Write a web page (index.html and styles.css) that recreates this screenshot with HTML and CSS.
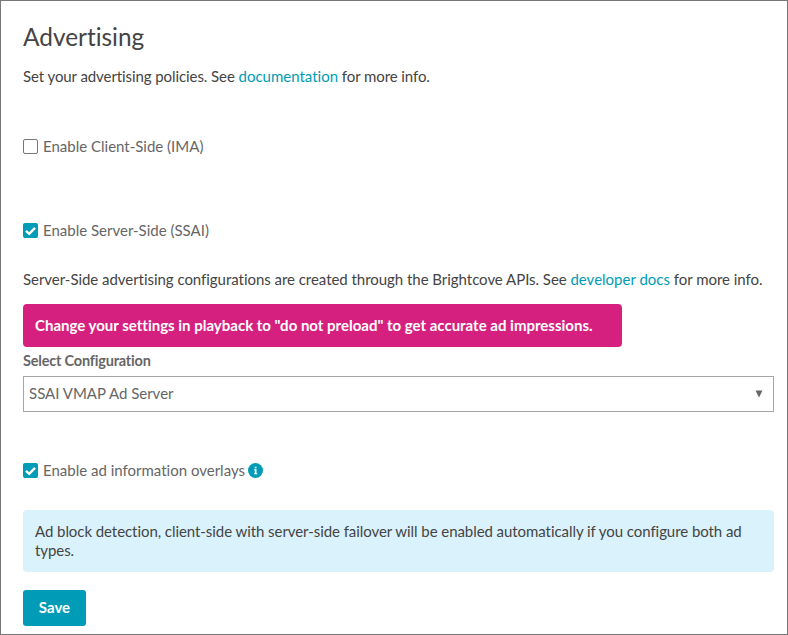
FILE: index.html
```html
<!DOCTYPE html>
<html lang="en">
<head>
<meta charset="utf-8">
<title>Advertising</title>
<link rel="stylesheet" href="styles.css">
</head>
<body>
<main class="panel">
  <h1 class="title">Advertising</h1>
  <p class="intro">Set your advertising policies. See <a href="#">documentation</a> for more info.</p>
  <label class="option client"><span class="box"></span>Enable Client-Side (IMA)</label>
  <label class="option server"><span class="box checked"><svg viewBox="0 0 15 15"><path d="M3 7.8 6.200 10.800 12 4.800"/></svg></span>Enable Server-Side (SSAI)</label>
  <p class="docs">Server-Side advertising configurations are created through the Brightcove APIs. See <a href="#">developer docs</a> for more info.</p>
  <div class="alert">Change your settings in playback to "do not preload" to get accurate ad impressions.</div>
  <div class="field-label">Select Configuration</div>
  <div class="select"><span>SSAI VMAP Ad Server</span><svg class="arrow" viewBox="0 0 8 8"><path d="M.5 .5h7L4 7.500z"/></svg></div>
  <label class="option overlays"><span class="box checked"><svg viewBox="0 0 15 15"><path d="M3 7.8 6.200 10.800 12 4.800"/></svg></span><span>Enable ad information overlays</span><svg class="info" viewBox="0 0 15 15"><circle cx="7.500" cy="7.500" r="7.500"/><path d="M6.700 3.700h1.800v1.500H6.700zM6 6.300h2.500v4h.8v1H6v-1h.8v-3H6z"/></svg></label>
  <div class="note">Ad block detection, client-side with server-side failover will be enabled automatically if you configure both ad types.</div>
  <button class="save">Save</button>
</main>
</body>
</html>
```
FILE: styles.css
```css
* { box-sizing: border-box; }
body { margin: 0; font: 15px/20px Lato, "Liberation Sans", sans-serif; font-variant-ligatures: none; color: #444; }
.panel { height: 635px; padding: 21px 13px 0 22px; border: 1px solid #777; background: #fff; display: flex; flex-direction: column; align-items: flex-start; }
h1, p { margin: 0; font-weight: 400; }
.title { font-size: 24.4px; line-height: 30px; }
.intro { margin-top: 14px; letter-spacing: -.083px; }
a { color: #009cb5; text-decoration: none; letter-spacing: 0; }
.option { display: flex; align-items: center; height: 20px; color: #666; }
.box { width: 15px; height: 15px; margin-right: 5px; border: 1px solid #777; border-radius: 2px; background: #fff; }
.checked { border: 0; background: #009cb7; }
.box svg { display: block; width: 15px; height: 15px; fill: none; stroke: #fff; stroke-width: 2.4; }
.client { margin-top: 50px; }
.server { margin-top: 64px; }
.docs { margin-top: 29px; white-space: nowrap; letter-spacing: -.038px; }
.alert { width: 599px; height: 43px; margin-top: 15px; padding: 0 12px; border-radius: 4px; background: #d6207f; color: #fff; font-weight: 700; line-height: 43px; white-space: nowrap; }
.field-label { margin-top: 4px; color: #666; font-size: 14.5px; font-weight: 700; letter-spacing: -.2px; }
.select { display: flex; align-items: center; justify-content: space-between; width: 751px; height: 36px; margin-top: 5px; padding: 0 10px 2px 5px; border: 1px solid #a6a6a6; color: #666; }
.arrow { position: relative; top: 1px; width: 8px; height: 8px; fill: #666; }
.overlays { margin-top: 48px; }
.info { width: 15px; height: 15px; margin-left: 3px; fill: #009cb7; }
.info path { fill: #fff; }
.note { width: 751px; height: 62px; margin-top: 30px; padding: 12px; border-radius: 4px; background: #daf2fc; line-height: 19px; letter-spacing: -.063px; }
.save { width: 63px; height: 36px; margin-top: 18px; padding: 0 0 2px; border: 0; border-radius: 3px; background: #009cb7; color: #fff; font: 700 15px/34px Lato, sans-serif; }
```
